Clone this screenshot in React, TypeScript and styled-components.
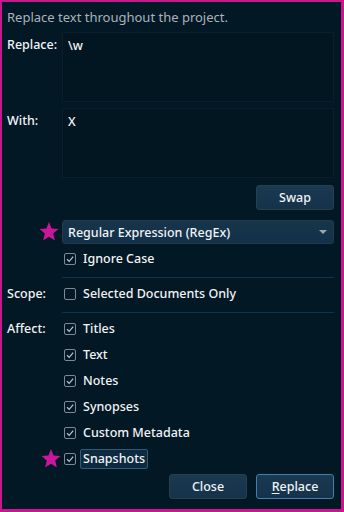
import React from 'react';
import styled, { createGlobalStyle } from 'styled-components';

const GlobalStyle = createGlobalStyle`
    html, body {
        margin: 0;
        padding: 0;
        background: #021825;
    }
    body {
        font-family: 'Noto Sans', 'Open Sans', sans-serif;
        font-size: 13px;
        color: #f1f3f5;
    }
`;

const Window = styled.div`
    width: 344px;
    height: 512px;
    box-sizing: border-box;
    border: 2px solid #c8168f;
    border-right-width: 3px;
    border-bottom-width: 3px;
    background: #021825;
    padding: 7px 7px 0 5px;
    display: flex;
    flex-direction: column;
`;

const Header = styled.div`
    color: #aab3bb;
    line-height: 16px;
    margin-bottom: 7px;
`;

const Form = styled.div`
    display: grid;
    grid-template-columns: 55px 1fr;
    align-items: center;
    font-size: 12.5px;
    font-weight: 500;
`;

const Label = styled.div<{ $top?: boolean }>`
    align-self: ${(p) => (p.$top ? 'start' : 'center')};
    padding-top: ${(p) => (p.$top ? '4px' : '0')};
    line-height: 18px;
`;

const TextBox = styled.div<{ $gap?: number }>`
    height: 70px;
    box-sizing: border-box;
    border: 1px solid #0b1e2a;
    background: #011621;
    padding: 4px 5px;
    line-height: 18px;
    margin-bottom: ${(p) => p.$gap ?? 6}px;
`;

const Spacer = styled.div``;

const ButtonRow = styled.div<{ $top?: number }>`
    display: flex;
    justify-content: flex-end;
    gap: 9px;
    margin-top: ${(p) => p.$top ?? 0}px;
`;

const Button = styled.button<{ $default?: boolean }>`
    width: 78px;
    height: 25px;
    box-sizing: border-box;
    border-radius: 3px;
    border: 1px solid ${(p) => (p.$default ? '#3f7fb2' : '#2a3f4e')};
    background: linear-gradient(#1a3a52, #15324a);
    color: #f1f3f5;
    font-family: inherit;
    font-size: 12.5px;
    font-weight: 500;
    padding: 0;
    cursor: pointer;

    u {
        text-decoration-thickness: 1px;
        text-underline-offset: 2px;
    }
`;

const Select = styled.div`
    height: 24px;
    margin-top: 10px;
    box-sizing: border-box;
    border: 1px solid #26394a;
    border-radius: 3px;
    background: linear-gradient(#173549, #12304a);
    display: flex;
    align-items: center;
    justify-content: space-between;
    padding: 0 6px 0 5px;
`;

const Arrow = styled.span`
    width: 0;
    height: 0;
    border-left: 4px solid transparent;
    border-right: 4px solid transparent;
    border-top: 4px solid #9aa6b0;
`;

const StarCell = styled.div`
    position: relative;
    align-self: stretch;
`;

const StarIcon = styled.svg<{ $left: number; $top: number }>`
    position: absolute;
    left: ${(p) => p.$left}px;
    top: ${(p) => p.$top}px;
`;

const CheckList = styled.div<{ $top?: number }>`
    margin-top: ${(p) => p.$top ?? 0}px;
`;

const CheckRow = styled.label`
    position: relative;
    display: flex;
    align-items: center;
    gap: 4px;
    height: 26px;
    padding-left: 2px;
`;

const Box = styled.span`
    width: 12px;
    height: 12px;
    box-sizing: border-box;
    border: 1px solid #7d8a94;
    border-radius: 2px;
    display: flex;
    align-items: center;
    justify-content: center;
`;

const CheckText = styled.span<{ $focus?: boolean }>`
    padding: 1px 2px;
    border: 1px solid ${(p) => (p.$focus ? '#2f5a78' : 'transparent')};
    background: ${(p) => (p.$focus ? '#0d2a3e' : 'transparent')};
    border-radius: 2px;
    line-height: 16px;
`;

const Separator = styled.div`
    height: 1px;
    background: #0e3550;
    margin: 5px 0 3px;
`;

const Star = ({ left, top }: { left: number; top: number }) => (
    <StarIcon $left={left} $top={top} width="22" height="22" viewBox="0 0 22 22">
        <polygon
            fill="#c8179a"
            points="11,1 13.6,7.6 20.5,8.1 15.2,12.6 16.9,19.5 11,15.7 5.1,19.5 6.8,12.6 1.5,8.1 8.4,7.6"
        />
    </StarIcon>
);

const Check = ({
    label,
    checked = true,
    focus,
    starred,
}: {
    label: string;
    checked?: boolean;
    focus?: boolean;
    starred?: boolean;
}) => (
    <CheckRow>
        {starred && <Star left={-22} top={2} />}
        <Box>
            {checked && (
                <svg width="10" height="10" viewBox="0 0 10 10">
                    <path d="M2 5.2 L4.2 7.4 L8.2 2.6" fill="none" stroke="#b7c0c7" strokeWidth="1.3" />
                </svg>
            )}
        </Box>
        <CheckText $focus={focus}>{label}</CheckText>
    </CheckRow>
);

const affectItems = ['Titles', 'Text', 'Notes', 'Synopses', 'Custom Metadata', 'Snapshots'];

const App = () => {
    return (
        <>
            <GlobalStyle />
            <Window>
                <Header>Replace text throughout the project.</Header>
                <Form>
                    <Label $top>Replace:</Label>
                    <TextBox>\w</TextBox>
                    <Label $top>With:</Label>
                    <TextBox $gap={7}>X</TextBox>
                    <Spacer />
                    <ButtonRow>
                        <Button>Swap</Button>
                    </ButtonRow>
                    <StarCell>
                        <Star left={31} top={11} />
                    </StarCell>
                    <Select>
                        Regular Expression (RegEx)
                        <Arrow />
                    </Select>
                    <Spacer />
                    <CheckList $top={2}>
                        <Check label="Ignore Case" />
                    </CheckList>
                    <Spacer />
                    <Separator />
                    <Label>Scope:</Label>
                    <Check label="Selected Documents Only" checked={false} />
                    <Spacer />
                    <Separator />
                    <Label $top>Affect:</Label>
                    <CheckList>
                        {affectItems.map((item) => (
                            <Check
                                key={item}
                                label={item}
                                focus={item === 'Snapshots'}
                                starred={item === 'Snapshots'}
                            />
                        ))}
                    </CheckList>
                </Form>
                <ButtonRow $top={2}>
                    <Button>Close</Button>
                    <Button $default>
                        <u>R</u>eplace
                    </Button>
                </ButtonRow>
            </Window>
        </>
    );
};

export default App;
